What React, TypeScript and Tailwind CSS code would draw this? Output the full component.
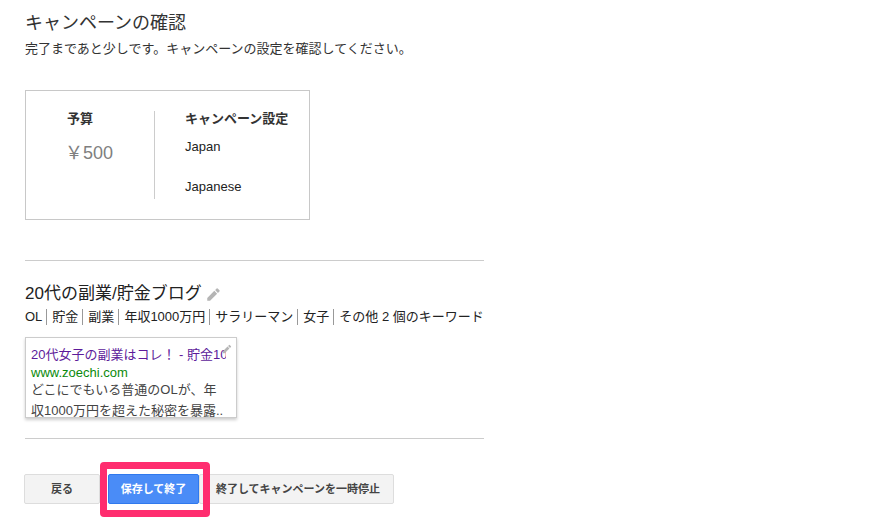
const font = "font-['Liberation_Sans','Noto_Sans_CJK_JP',sans-serif]";

const keywords = ['OL', '貯金', '副業', '年収1000万円', 'サラリーマン', '女子', 'その他 2 個のキーワード'];

function Pencil({ className }: { className: string }) {
  return (
    <svg viewBox="0 0 24 24" className={className} fill="currentColor">
      <path d="M2 17.5V22h4.5L17.81 10.69l-4.5-4.5L2 17.5zM21.5 7a1.2 1.2 0 0 0 0-1.7l-2.8-2.8a1.2 1.2 0 0 0-1.7 0l-2.4 2.4 4.5 4.5L21.5 7z" />
    </svg>
  );
}

export default function App() {
  return (
    <div className={`${font} h-[525px] w-[880px] overflow-hidden bg-white pl-[25px] pt-[11px] text-[#222]`}>
      <h1 className="text-[18px] leading-[24px] text-[#333]">キャンペーンの確認</h1>
      <p className="mt-[4px] text-[13px] leading-[20px] text-[#333]">
        完了まであと少しです。キャンペーンの設定を確認してください。
      </p>

      <div className="mt-[31px] flex h-[130px] w-[285px] border border-[#c8c8c8] pt-[20px]">
        <div className="h-[88px] w-[129px] border-r border-[#ccc] pl-[41px]">
          <div className="text-[13px] font-bold leading-[16px] text-[#333]">予算</div>
          <div className="-ml-[2px] mt-[14px] text-[18px] leading-[24px] text-[#7f7f7f]">￥500</div>
        </div>
        <div className="pl-[30px] text-[13px] text-[#222]">
          <div className="font-bold leading-[16px] text-[#333]">キャンペーン設定</div>
          <div className="mt-[12px] leading-[16px]">Japan</div>
          <div className="mt-[24px] leading-[16px]">Japanese</div>
        </div>
      </div>

      <div className="mt-[40px] w-[459px] border-t border-[#ccc] pt-[22px]">
        <div className="flex items-center gap-[4px]">
          <h2 className="text-[17px] leading-[22px] text-[#222]">20代の副業/貯金ブログ</h2>
          <Pencil className="h-[15px] w-[15px] text-[#b5b5b5]" />
        </div>
        <div className="mt-[4px] flex whitespace-nowrap text-[13px] leading-[16px] text-[#222]">
          {keywords.map((k, i) => (
            <span key={k} className={i > 0 ? 'ml-[4px] border-l border-[#999] pl-[5px]' : ''}>
              {k}
            </span>
          ))}
        </div>

        <div className="relative mt-[12px] h-[81px] w-[212px] overflow-hidden border border-[#ccc] pl-[5px] pr-[10px] pt-[8px] text-[13px] shadow-[0_2px_3px_rgba(0,0,0,0.2)]">
          <div className="h-[18px] overflow-hidden whitespace-nowrap leading-[18px] text-[#5d1a9a]">
            20代女子の副業はコレ！ - 貯金1000
          </div>
          <div className="mt-[1px] leading-[16px] text-[#0a8a0a]">www.zoechi.com</div>
          <div className="-mt-[2px] whitespace-nowrap leading-[21px] text-[#444]">
            どこにでもいる普通のOLが、年
            <br />
            収1000万円を超えた秘密を暴露..
          </div>
          <Pencil className="absolute right-[4px] top-[6px] h-[10px] w-[10px] text-[#b5b5b5]" />
        </div>
      </div>

      <div className="mt-[20px] w-[459px] border-t border-[#ccc]" />

      <div className="relative -ml-px mt-[35px] flex h-[30px] w-[370px] text-[11px] font-bold">
        <button className="h-full w-[76px] rounded-[2px] border border-[#ddd] bg-[#f3f3f3] text-[#444]">戻る</button>
        <button className="relative z-10 ml-[8px] h-full w-[91px] rounded-[2px] border border-[#3079ed] bg-[#4a8cf7] text-white">
          保存して終了
        </button>
        <button className="h-full flex-1 rounded-[2px] border border-[#ddd] bg-[#f3f3f3] pl-[3px] text-[#444]">
          終了してキャンペーンを一時停止
        </button>
        <div className="absolute left-[76px] top-[-12px] z-20 h-[55px] w-[110px] rounded-[4px] border-[7px] border-[#ff2d6f]" />
      </div>
    </div>
  );
}
